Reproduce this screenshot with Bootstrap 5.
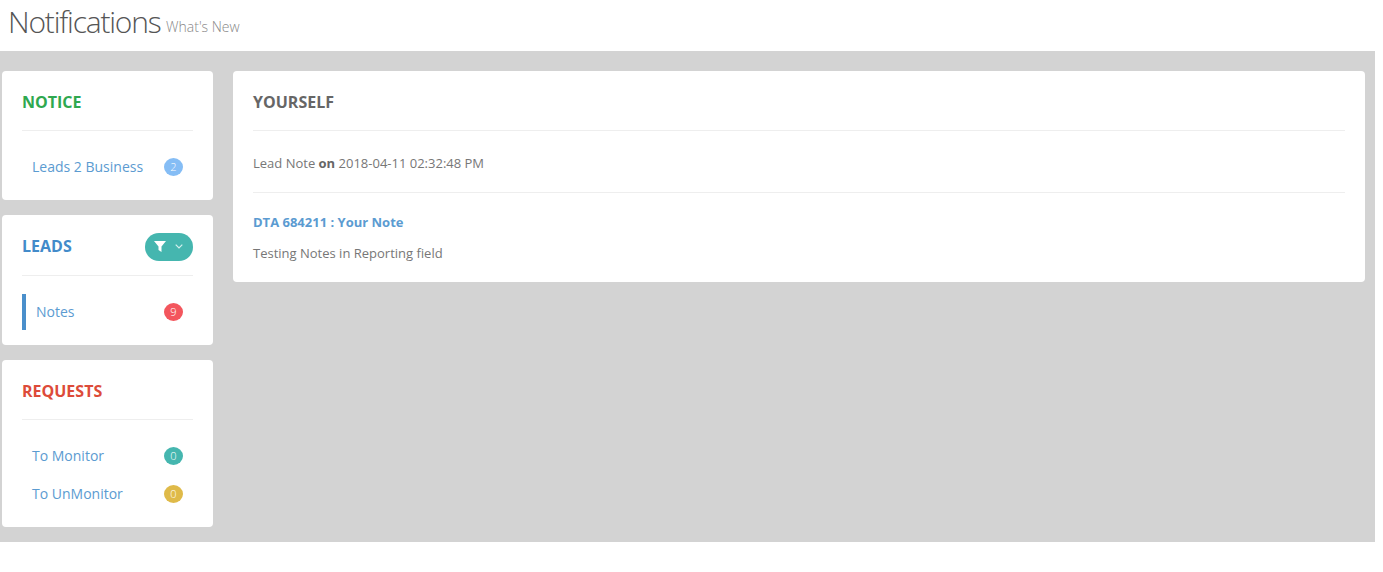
<!DOCTYPE html>
<html lang="en">
<head>
    <meta charset="UTF-8">
    <meta name="viewport" content="width=device-width, initial-scale=1.0">
    <title>Notifications</title>
    <link rel="stylesheet" href="https://cdn.jsdelivr.net/npm/bootstrap@5.3.0/dist/css/bootstrap.min.css">
    <style>
        html, body { height: 100%; }
        body { font-family: "Open Sans", sans-serif; font-size: 13px; color: #777; background: #fff; overflow: hidden; }
        a { text-decoration: none; }
        .page-head { height: 51px; padding-left: 8px; }
        .page-head h1 { font-size: 30px; font-weight: 300; letter-spacing: -1.2px; color: #555; margin: 0; line-height: 44px; }
        .page-head small { font-size: 14px; font-weight: 300; letter-spacing: 0; color: #888; margin-left: -1px; vertical-align: 1px; }
        .page-band { width: 1375px; height: 491px; background: #d3d3d3; padding: 20px 10px 0 2px; gap: 20px; }
        .side-col { width: 211px; flex: none; gap: 15px; }
        .pane { background: #fff; border-radius: 4px; padding: 0 20px; }
        .pane-notice { height: 129px; }
        .pane-leads { height: 130px; }
        .pane-requests { height: 167px; }
        .pane-title { height: 59px; margin: 0; font-size: 16px; font-weight: 700; line-height: 62px; border-bottom: 1px solid #eee; box-sizing: content-box; }
        .title-notice { color: #2fa84f; }
        .title-leads { color: #428bca; height: 60px; }
        .title-leads > span { margin-top: 2px; }
        .title-requests { color: #dd4b39; }
        .title-self { color: #666; }
        .side-item { height: 36px; padding: 0 10px; font-size: 14px; color: #5b9bd1; margin-top: 18px; }
        .side-item + .side-item { margin-top: 2px; }
        .side-item > span:first-child { margin-bottom: 2px; }
        .side-item.active-item { border-left: 4px solid #4a8fcb; }
        .count-dot { width: 19px; height: 18px; border-radius: 50%; font-size: 11px; font-weight: 300; color: #fff; line-height: 18px; text-align: center; }
        .dot-blue { background: #85bdf5; }
        .dot-red { background: #f3565d; }
        .dot-teal { background: #45b6af; }
        .dot-yellow { background: #dfba49; }
        .filter-btn { width: 48px; height: 28px; background: #45b6af; border-radius: 14px; padding-left: 9px; gap: 9px; margin-top: 3px; }
        .note-meta { height: 62px; border-bottom: 1px solid #eee; line-height: 64px; }
        .note-meta b { color: #666; }
        .note-link { display: block; color: #5b9bd1; font-weight: 700; margin-top: 20px; line-height: 18px; }
        .note-text { margin: 13px 0 0; line-height: 18px; height: 38px; }
    </style>
</head>
<body>
<div class="page-head">
    <h1>Notifications <small>What's New</small></h1>
</div>
<div class="page-band d-flex">
    <div class="side-col d-flex flex-column">
        <div class="pane pane-notice">
            <h3 class="pane-title title-notice">NOTICE</h3>
            <a href="#" class="side-item d-flex justify-content-between align-items-center">
                <span>Leads 2 Business</span><span class="count-dot dot-blue">2</span>
            </a>
        </div>
        <div class="pane pane-leads">
            <div class="pane-title title-leads d-flex justify-content-between align-items-center">
                <span>LEADS</span>
                <a href="#" class="filter-btn d-flex align-items-center">
                    <svg width="12" height="11" viewBox="0 0 12 11"><path d="M0 0H12L7.5 5.5V11L4.5 9V5.5Z" fill="#fff"/></svg>
                    <svg width="8" height="5" viewBox="0 0 8 5"><path d="M.7.7 4 4 7.3.7" fill="none" stroke="#d5f0ee" stroke-width="1.2"/></svg>
                </a>
            </div>
            <a href="#" class="side-item active-item d-flex justify-content-between align-items-center">
                <span>Notes</span><span class="count-dot dot-red">9</span>
            </a>
        </div>
        <div class="pane pane-requests">
            <h3 class="pane-title title-requests">REQUESTS</h3>
            <a href="#" class="side-item d-flex justify-content-between align-items-center">
                <span>To Monitor</span><span class="count-dot dot-teal">0</span>
            </a>
            <a href="#" class="side-item d-flex justify-content-between align-items-center">
                <span>To UnMonitor</span><span class="count-dot dot-yellow">0</span>
            </a>
        </div>
    </div>
    <div class="flex-grow-1 align-self-start">
        <div class="pane">
            <h3 class="pane-title title-self">YOURSELF</h3>
            <div class="note-meta">Lead Note <b>on</b> 2018-04-11 02:32:48 PM</div>
            <a href="#" class="note-link">DTA 684211 : Your Note</a>
            <p class="note-text">Testing Notes in Reporting field</p>
        </div>
    </div>
</div>
<script src="https://cdn.jsdelivr.net/npm/bootstrap@5.3.0/dist/js/bootstrap.bundle.min.js"></script>
</body>
</html>
